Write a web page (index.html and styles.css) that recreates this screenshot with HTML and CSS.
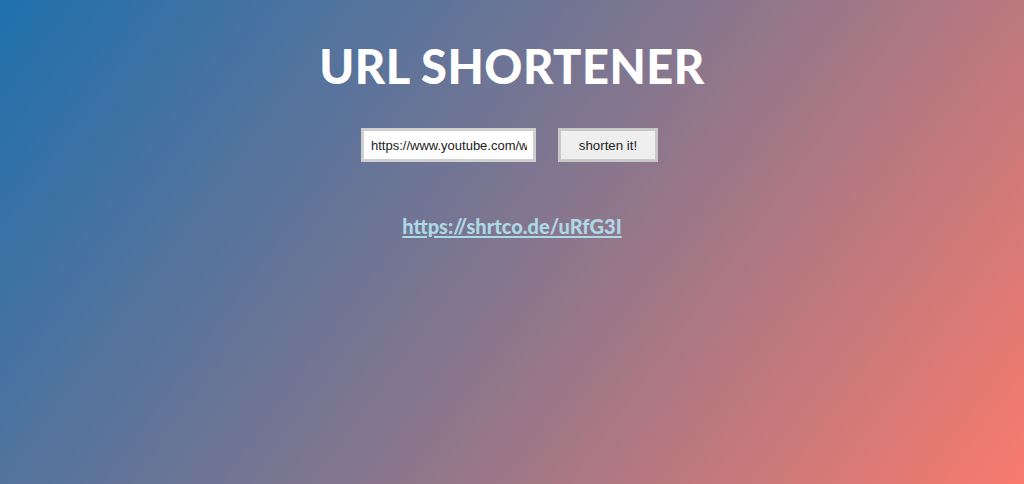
FILE: index.html
```html
<!DOCTYPE html>
<html lang="en">
<head>
<meta charset="utf-8">
<title>URL Shortener</title>
<link rel="stylesheet" href="styles.css">
</head>
<body>
<main class="app">
  <h1 class="title">URL SHORTENER</h1>
  <form class="form">
    <input class="url-input" type="text" value="https://www.youtube.com/watch?v=dQw4w9WgXcQ">
    <button class="submit" type="button">shorten it!</button>
  </form>
  <a class="result" href="#">https://shrtco.de/uRfG3I</a>
</main>
</body>
</html>
```

FILE: styles.css
```css
html, body {
  margin: 0;
  height: 100%;
}
body {
  background: linear-gradient(126deg, #1f70ad 0%, #82768f 50%, #f97b6d 100%);
  font-family: Lato, "Noto Sans", sans-serif;
  overflow: hidden;
}
.app {
  display: flex;
  flex-direction: column;
  align-items: center;
  padding-top: 38px;
}
.title {
  margin: 0;
  color: #fff;
  font-family: Lato, sans-serif;
  font-weight: 900;
  font-size: 47px;
  line-height: 56px;
  letter-spacing: 0.5px;
}
.form {
  display: flex;
  gap: 22px;
  margin-top: 34px;
  margin-right: 5px;
}
.url-input {
  box-sizing: border-box;
  width: 175px;
  height: 34px;
  border: 3px solid #cfcfcf;
  background: #fff;
  padding: 0 6px 0 7px;
  font-family: "Liberation Sans", Arial, sans-serif;
  font-size: 13px;
  color: #222;
  outline: none;
}
.submit {
  box-sizing: border-box;
  width: 100px;
  height: 34px;
  border: 3px solid #c8c8c8;
  background: #efefef;
  font-family: "Liberation Sans", Arial, sans-serif;
  font-size: 13.3px;
  color: #222;
  padding: 0;
}
.result {
  margin-top: 50px;
  color: #add8e6;
  font-family: Lato, sans-serif;
  font-weight: 900;
  font-size: 20px;
  line-height: 28px;
  text-decoration: underline;
  text-decoration-thickness: 2px;
  text-underline-offset: 2px;
}
```
